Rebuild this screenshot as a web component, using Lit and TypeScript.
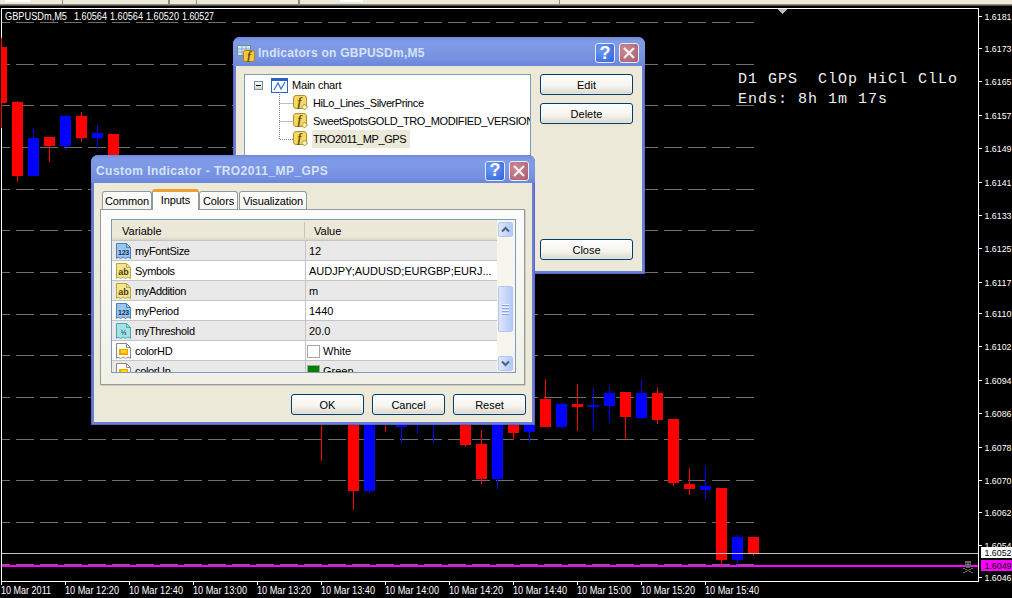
import { LitElement, html, css, svg } from "lit";
import { customElement } from "lit/decorators.js";

type C = [number, "r" | "b", number, number, number, number];
const CANDLES: C[] = [
  [-1, "r", 47, 103, 38, 128],
  [0, "r", 102, 176, 101, 182],
  [1, "b", 138, 176, 128, 176],
  [2, "r", 137, 146, 137, 162],
  [3, "b", 116, 146, 115, 150],
  [4, "r", 116, 138, 112, 142],
  [5, "b", 133, 138, 125, 149],
  [6, "r", 134, 175, 134, 175],
  [19, "r", 430, 430, 420, 461],
  [21, "r", 420, 491, 420, 510],
  [22, "b", 420, 491, 420, 493],
  [23, "r", 420, 420, 420, 432],
  [24, "b", 420, 427, 420, 443],
  [25, "b", 420, 420, 420, 433],
  [26, "b", 420, 420, 420, 443],
  [28, "r", 420, 445, 420, 447],
  [29, "r", 444, 479, 430, 484],
  [30, "b", 420, 479, 420, 489],
  [31, "r", 420, 433, 420, 440],
  [32, "b", 420, 432, 420, 442],
  [33, "r", 399, 427, 379, 427],
  [34, "b", 404, 427, 403, 428],
  [35, "r", 404, 407, 384, 431],
  [36, "b", 405, 407, 388, 430],
  [37, "b", 393, 406, 386, 423],
  [38, "r", 392, 417, 392, 439],
  [39, "b", 393, 418, 380, 419],
  [40, "r", 393, 420, 387, 424],
  [41, "r", 419, 483, 419, 486],
  [42, "r", 484, 489, 468, 495],
  [43, "b", 486, 490, 466, 499],
  [44, "r", 488, 560, 488, 565],
  [45, "b", 537, 560, 535, 565],
  [46, "r", 537, 554, 537, 556],
];
const GRID = [22, 64, 105, 147, 189, 230, 272, 314, 355, 397, 439, 480, 522, 564];
const PRICES: [string, number][] = [
  ["1.6181", 16], ["1.6173", 48], ["1.6165", 81], ["1.6157", 115], ["1.6149", 148], ["1.6141", 182],
  ["1.6133", 215], ["1.6125", 248], ["1.6117", 282], ["1.6110", 313], ["1.6102", 346], ["1.6094", 380],
  ["1.6086", 413], ["1.6078", 447], ["1.6070", 480], ["1.6062", 512], ["1.6054", 545], ["1.6046", 577],
];
const TIMES = ["10 Mar 2011", "10 Mar 12:20", "10 Mar 12:40", "10 Mar 13:00", "10 Mar 13:20", "10 Mar 13:40",
  "10 Mar 14:00", "10 Mar 14:20", "10 Mar 14:40", "10 Mar 15:00", "10 Mar 15:20", "10 Mar 15:40"];

type Kind = "int" | "str" | "dbl" | "col";
const ROWS: { kind: Kind; name: string; value: string; swatch?: string }[] = [
  { kind: "int", name: "myFontSize", value: "12" },
  { kind: "str", name: "Symbols", value: "AUDJPY;AUDUSD;EURGBP;EURJ..." },
  { kind: "str", name: "myAddition", value: "m" },
  { kind: "int", name: "myPeriod", value: "1440" },
  { kind: "dbl", name: "myThreshold", value: "20.0" },
  { kind: "col", name: "colorHD", value: "White", swatch: "#ffffff" },
  { kind: "col", name: "colorUp", value: "Green", swatch: "#008000" },
];

const DOC = "M1.500 .5H11.500L15.500 4.500V15.500L13 14 10.500 15.500 8 14 5.500 15.500 3 14 1.500 15.500Z";
function docIcon(kind: Kind) {
  const s = {
    int: ["#9cc6ee", "#4a7fb5", "123", "#0e2f66"],
    str: ["#f3e68e", "#b8a544", "ab", "#4a4010"],
    dbl: ["#a4e2e8", "#4fa6b4", "½", "#0d5a68"],
    col: ["#ffffff", "#8a8a8a", "", ""],
  }[kind];
  return html`<svg class="doc" width="17" height="16" viewBox="0 0 17 16">
    <path d=${DOC} fill=${s[0]} stroke=${s[1]}></path>
    <path d="M11.500 .5V4.500H15.500" fill="none" stroke=${s[1]}></path>
    ${kind === "col"
      ? svg`<rect x="4" y="6" width="9" height="6" fill="#ff9c00"></rect><rect x="6" y="7" width="6" height="3" fill="#ffe000"></rect>`
      : svg`<text x="8.500" y="11.500" text-anchor="middle" class=${kind === "str" ? "doc-t big" : "doc-t"} fill=${s[3]}>${s[2]}</text>`}
  </svg>`;
}
function fIcon() {
  return html`<svg class="ficon" width="16" height="16" viewBox="0 0 16 16">
    <rect x=".5" y=".5" width="13" height="13" rx="2.500" fill="#f6d964" stroke="#b3902c"></rect>
    <text x="4.500" y="10.500" class="f-t">f</text>
    <path d="M11.500 9L14.500 12 11.500 15 8.500 12Z" fill="#fff3b0" stroke="#b3902c"></path>
  </svg>`;
}
function chevron(up: boolean) {
  return html`<svg width="9" height="7" viewBox="0 0 9 7">
    <path d=${up ? "M1 5.500L4.500 2 8 5.500" : "M1 1.500L4.500 5 8 1.500"} fill="none" stroke="#4d6185" stroke-width="2"></path>
  </svg>`;
}

@customElement("app-root")
export class AppRoot extends LitElement {
  static styles = css`
    :host { display: block; width: 1012px; height: 598px; overflow: hidden; font-family: "Liberation Sans", Arial, sans-serif; }
    * { box-sizing: border-box; }
    .stage { position: relative; width: 1012px; height: 598px; background: #000; display: flex; flex-direction: column; overflow: hidden; }
    .toolbar { position: relative; flex: none; height: 8px; background: linear-gradient(#ece9d8 0 4px, #8d8b7e 4px 5px, #55544c 5px 6px, #000 6px); display: flex; gap: 0; }
    .tb-w { height: 2px; background: #fff; margin-left: 5px; width: 25px; }
    .tb-w2 { height: 2px; background: #fff; margin-left: 40px; width: 23px; }
    .tb-s { height: 4px; width: 1px; background: #8d8b7e; }
    .tb-a { margin-left: 32px; } .tb-b { margin-left: 105px; width: 2px; } .tb-c { margin-left: 26px; } .tb-d { margin-left: 101px; width: 2px; }
    .tb-e { margin-left: 196px; }
    svg.chart { display: block; flex: none; }
    svg.chart text { font-family: "Liberation Sans", Arial, sans-serif; fill: #fff; font-size: 10px; }
    svg.chart text.price { font-size: 9px; }
    svg.chart text.dark { fill: #000; }
    svg.chart text.mono { font-family: "Liberation Mono", monospace; font-size: 15px; letter-spacing: 1px; fill: #f0f0f0; }
    .win { position: absolute; display: flex; flex-direction: column; padding: 0 3px 3px; background: #6a7fd8; border-radius: 7px 7px 0 0; box-shadow: inset 0 0 0 1px #5a68c4; }
    .w1 { left: 233px; top: 37px; width: 412px; height: 237px; }
    .w2 { left: 91px; top: 155px; width: 444px; height: 270px; }
    .title { flex: none; height: 29px; margin: 0 -3px; padding: 3px 6px 0 5px; display: flex; align-items: center; gap: 4px; border-radius: 7px 7px 0 0;
      background: linear-gradient(#6f8ade 0, #7f9ae6 4px, #7d98e4 12px, #7591e0 22px, #6b86da 100%); color: #d6e2f8; font-weight: bold; font-size: 12px; letter-spacing: .25px; white-space: nowrap; }
    .w2 .title { height: 28px; letter-spacing: .45px; }
    .title .tx { flex: 1; }
    .tico { display: block; flex: none; margin: 0 -1px 0 -1px; }
    .cap { width: 20px; height: 20px; flex: none; border-radius: 3px; border: 1px solid #e6ecfb; display: flex; align-items: center; justify-content: center; font-weight: bold; color: #fff; font-size: 18px; letter-spacing: 0; }
    .help { background: radial-gradient(circle at 30% 30%, #6f9bf5, #2f62dc); }
    .close { background: radial-gradient(circle at 30% 30%, #c88a94, #ab5a6c); }
    .close svg { display: block; }
    .body { flex: 1; background: #ece9d8; min-height: 0; font-size: 11px; color: #000; }
    .w1 .body { display: flex; gap: 9px; padding: 8px 9px 11px 8px; }
    .tree { width: 287px; border: 1px solid #7f9db9; background: #fff; padding-top: 1px; overflow: hidden; white-space: nowrap; }
    .tree-row { display: flex; align-items: center; height: 18px; }
    .tree-main { padding-left: 9px; }
    .minus { width: 9px; height: 9px; border: 1px solid #7b8ea5; background: linear-gradient(#fff, #d8d4c4); display: flex; align-items: center; justify-content: center; }
    .minus i { display: block; width: 5px; height: 1px; background: #000; }
    .chart-ico { margin: 0 3px 0 8px; display: block; }
    .tree-item { padding-left: 34px; }
    .elbow { display: block; flex: none; }
    .ficon { display: block; flex: none; margin-right: 3px; }
    .label { padding: 0 1px; line-height: 18px; letter-spacing: -.4px; }
    .tree-main .label { letter-spacing: -.2px; }
    .label.sel { background: #ece9d8; padding: 0 4px 0 1px; }
    .side { width: 93px; display: flex; flex-direction: column; gap: 8px; }
    .side .btn:last-child { margin-top: auto; }
    .btn { height: 21px; border: 1px solid #003c74; border-radius: 3px; background: linear-gradient(#fff, #f4f3ee 60%, #e2dfd4 90%, #d6d0c5); display: flex; align-items: center; justify-content: center; font-size: 11px; color: #000; box-shadow: inset 0 0 0 1px rgba(255,255,255,.4); }
    .w2 .body { display: flex; flex-direction: column; padding: 6px 6px 7px 6px; }
    .tabs { display: flex; align-items: flex-end; height: 21px; flex: none; padding-left: 2px; gap: 1px; position: relative; z-index: 1; margin-bottom: -1px; }
    .tab { height: 18px; padding: 0 5px; margin-bottom: 1px; border: 1px solid #919b9c; border-bottom: none; border-radius: 3px 3px 0 0; background: linear-gradient(#fff, #f4f3ee); display: flex; align-items: center; justify-content: center; letter-spacing: -.1px; }
    .tab.on { height: 21px; margin: 0 -1px; padding: 0 7px 2px; background: #fcfcfa; border-top: 3px solid #f0a030; position: relative; border-color: #f0a030 #919b9c transparent; }
    .t1 { width: 50px; } .t2 { width: 47px; } .t3 { width: 39px; } .t4 { width: 68px; }
    .panel { flex: none; height: 176px; width: 425px; border: 1px solid #919b9c; background: linear-gradient(#fcfcfb, #f1f0e6); padding: 9px 8px 10px 10px; box-shadow: 1px 1px 0 #d0cdbd; }
    .tbl { height: 154px; border: 1px solid #7f9db9; background: #fff; display: flex; overflow: hidden; }
    .cols { width: 385px; flex: none; }
    .hdr { height: 20px; display: grid; grid-template-columns: 192px 193px; background: linear-gradient(#ece9d8, #ebe8d7 85%, #d8d4c3); }
    .hdr div { padding: 1px 0 0 10px; line-height: 20px; position: relative; }
    .hdr div + div { border-left: 1px solid #c8c5b2; height: 16px; margin-top: 2px; line-height: 16px; padding-left: 9px; }
    .row { height: 20px; display: grid; grid-template-columns: 193px 192px; background: #fff; border-top: 1px solid #c4c4c4; }
    .row.alt { background: #e9e9e9; }
    .name { display: flex; align-items: center; gap: 3px; padding: 1px 0 0 3px; letter-spacing: -.35px; }
    .doc { display: block; flex: none; }
    .doc-t { font: bold 7px "Liberation Sans", Arial, sans-serif; letter-spacing: -.3px; }
    .doc-t.big { font-size: 9px; letter-spacing: 0; }
    .f-t { font: italic bold 12px "Liberation Serif", serif; fill: #6a5010; }
    .val { display: flex; align-items: center; border-left: 1px solid #c4c4c4; padding: 1px 0 0 3px; gap: 3px; white-space: nowrap; }
    .swatch { width: 13px; height: 13px; border: 1px solid #a8a8a0; flex: none; margin-left: -2px; }
    .scroll { flex: 1; background: #f6f5ee; padding: 2px 2px 1px 1px; display: flex; flex-direction: column; }
    .sb { width: 15px; flex: none; border: 1px solid #fff; border-radius: 2px; outline: 1px solid #b4c6ef; outline-offset: -1px; background: linear-gradient(90deg, #dde7fc, #b3c9f8); display: flex; align-items: center; justify-content: center; }
    .sb.arrow { height: 15px; }
    .sb.thumb { height: 46px; margin: 49px 0 24px; flex-direction: column; gap: 1px; }
    .sb.thumb i { display: block; width: 7px; height: 1px; background: #eef3ff; box-shadow: 0 1px 0 #8ca6e0; margin-bottom: 1px; }
    .actions { flex: none; display: flex; justify-content: flex-end; gap: 8px; margin-top: 9px; }
    .actions .btn { width: 73px; }
  `;

  private renderChart() {
    const fit = "spacingAndGlyphs";
    return html`<svg class="chart" width="1012" height="590" viewBox="0 8 1012 590" shape-rendering="crispEdges">
      <path d="M1.500 8.500H978.500V581.500H1.500Z" fill="none" stroke="#fff"></path>
      ${GRID.map((y) => svg`<line x1="2" x2="754" y1=${y + 0.5} y2=${y + 0.5} stroke="#6f6f6f" stroke-dasharray="18 6" stroke-dashoffset="10"></line>`)}
      ${CANDLES.map(([k, d, t, b, wt, wb]) => {
        const x = 12 + 16 * k;
        const c = d === "r" ? "#ff0000" : "#0000ff";
        return svg`<rect x=${x + 5} y=${wt} width="1" height=${wb - wt} fill=${c}></rect>
          <rect x=${Math.max(x, 1)} y=${t} width=${x < 1 ? 11 + x - 1 : 11} height=${b - t} fill=${c}></rect>`;
      })}
      <rect x="2" y="553" width="976" height="1" fill="#c0c0c0"></rect>
      <rect x="2" y="565" width="976" height="2" fill="#ff00ff"></rect>
      <path d="M778 9H787L782.500 14Z" fill="#b8b8b8"></path>
      <g fill="#666">
        <rect x="965" y="561" width="6" height="5"></rect><rect x="966" y="566" width="4" height="2"></rect>
        <path d="M963 568h2v1h2v1h2v-1h2v-1h2v1h-2v1h-2v1h2v1h2v1h-2v-1h-2v-1h-2v1h-2v1h-2v-1h2v-1h2v-1h-2v-1h-2z"></path>
      </g>
      <g fill="#000"><rect x="966" y="563" width="1" height="1"></rect><rect x="969" y="563" width="1" height="1"></rect></g>
      ${PRICES.map(([p, y]) => svg`<rect x="979" y=${y} width="3" height="1" fill="#fff"></rect>
        <text class="price" x="984.500" y=${y + 4} textLength="27" lengthAdjust=${fit}>${p}</text>`)}
      <rect x="981" y="547" width="31" height="11" fill="#fff"></rect>
      <text class="price dark" x="984.500" y="556" textLength="27" lengthAdjust=${fit}>1.6052</text>
      <rect x="981" y="560" width="31" height="11" fill="#ff00ff"></rect>
      <text class="price dark" x="984.500" y="569" textLength="27" lengthAdjust=${fit}>1.6049</text>
      ${TIMES.map((t, i) => {
        const x = 1 + 64 * i;
        return svg`<rect x=${x} y="582" width="1" height="3" fill="#fff"></rect>
          <text x=${x} y="594" textLength=${i === 0 ? 50 : 54} lengthAdjust=${fit}>${t}</text>`;
      })}
      <text x="5" y="20" textLength="62" lengthAdjust=${fit}>GBPUSDm,M5</text>
      <text x="74" y="20" textLength="33" lengthAdjust=${fit}>1.60564</text>
      <text x="110" y="20" textLength="33" lengthAdjust=${fit}>1.60564</text>
      <text x="146" y="20" textLength="33" lengthAdjust=${fit}>1.60520</text>
      <text x="182" y="20" textLength="32" lengthAdjust=${fit}>1.60527</text>
      <text class="mono" x="738" y="83" xml:space="preserve">D1 GPS  ClOp HiCl ClLo</text>
      <text class="mono" x="738" y="103" xml:space="preserve">Ends: 8h 1m 17s</text>
    </svg>`;
  }

  private caps() {
    return html`<div class="cap help">?</div>
      <div class="cap close"><svg width="14" height="14" viewBox="0 0 14 14"><path d="M2 2L12 12M12 2L2 12" stroke="#f8ecec" stroke-width="2.400"></path></svg></div>`;
  }

  render() {
    const items = ["HiLo_Lines_SilverPrince", "SweetSpotsGOLD_TRO_MODIFIED_VERSION", "TRO2011_MP_GPS"];
    return html`<div class="stage">
      <div class="toolbar">
        <div class="tb-w"></div><div class="tb-s tb-a"></div><div class="tb-s tb-b"></div><div class="tb-s tb-c"></div><div class="tb-s tb-d"></div>
        <div class="tb-w2"></div><div class="tb-s tb-e"></div>
      </div>
      ${this.renderChart()}

      <section class="win w1">
        <header class="title">
          <svg class="tico" width="18" height="18" viewBox="0 0 18 18">
            <rect x=".5" y="1.500" width="13" height="10" fill="#dfe6f5" stroke="#5f9a8c"></rect>
            <path d="M1 5H13M1 8H13M5 2V11M9 2V11" stroke="#8aa4c8"></path>
            <rect x="6.500" y="6.500" width="11" height="11" rx="2" fill="#f6c93c" stroke="#b07f14"></rect>
            <text x="10" y="15.500" class="f-t">f</text>
          </svg>
          <span class="tx">Indicators on GBPUSDm,M5</span>
          ${this.caps()}
        </header>
        <div class="body">
          <div class="tree">
            <div class="tree-row tree-main">
              <span class="minus"><i></i></span>
              <svg class="chart-ico" width="17" height="15" viewBox="0 0 17 15">
                <rect x=".5" y=".5" width="16" height="14" fill="#fff" stroke="#2a62c8"></rect>
                <rect x="1" y="1" width="15" height="2" fill="#2a62c8"></rect>
                <path d="M3 12L7 5 10 11 14 4" fill="none" stroke="#3a7ae0" stroke-width="1.300"></path>
              </svg>
              <span class="label">Main chart</span>
            </div>
            ${items.map((t, i) => html`<div class="tree-row tree-item">
              <svg class="elbow" width="14" height="18" viewBox="0 0 14 18">
                <path d=${i === 2 ? "M.5 0V9.500H14" : "M.5 0V18M.5 9.500H14"} fill="none" stroke="#808080" stroke-dasharray="1 1"></path>
              </svg>
              ${fIcon()}
              <span class=${i === 2 ? "label sel" : "label"}>${t}</span>
            </div>`)}
          </div>
          <div class="side">
            <div class="btn">Edit</div>
            <div class="btn">Delete</div>
            <div class="btn">Close</div>
          </div>
        </div>
      </section>

      <section class="win w2">
        <header class="title">
          <span class="tx">Custom Indicator - TRO2011_MP_GPS</span>
          ${this.caps()}
        </header>
        <div class="body">
          <div class="tabs">
            <div class="tab t1">Common</div>
            <div class="tab on t2">Inputs</div>
            <div class="tab t3">Colors</div>
            <div class="tab t4">Visualization</div>
          </div>
          <div class="panel">
            <div class="tbl">
              <div class="cols">
                <div class="hdr"><div>Variable</div><div>Value</div></div>
                ${ROWS.map((r, i) => html`<div class=${i % 2 === 0 ? "row alt" : "row"}>
                  <div class="name">${docIcon(r.kind)}<span>${r.name}</span></div>
                  <div class="val">${r.swatch ? html`<span class="swatch" style="background:${r.swatch}"></span>` : ""}<span>${r.value}</span></div>
                </div>`)}
              </div>
              <div class="scroll">
                <div class="sb arrow">${chevron(true)}</div>
                <div class="sb thumb"><i></i><i></i><i></i><i></i></div>
                <div class="sb arrow">${chevron(false)}</div>
              </div>
            </div>
          </div>
          <div class="actions">
            <div class="btn">OK</div>
            <div class="btn">Cancel</div>
            <div class="btn">Reset</div>
          </div>
        </div>
      </section>
    </div>`;
  }
}
